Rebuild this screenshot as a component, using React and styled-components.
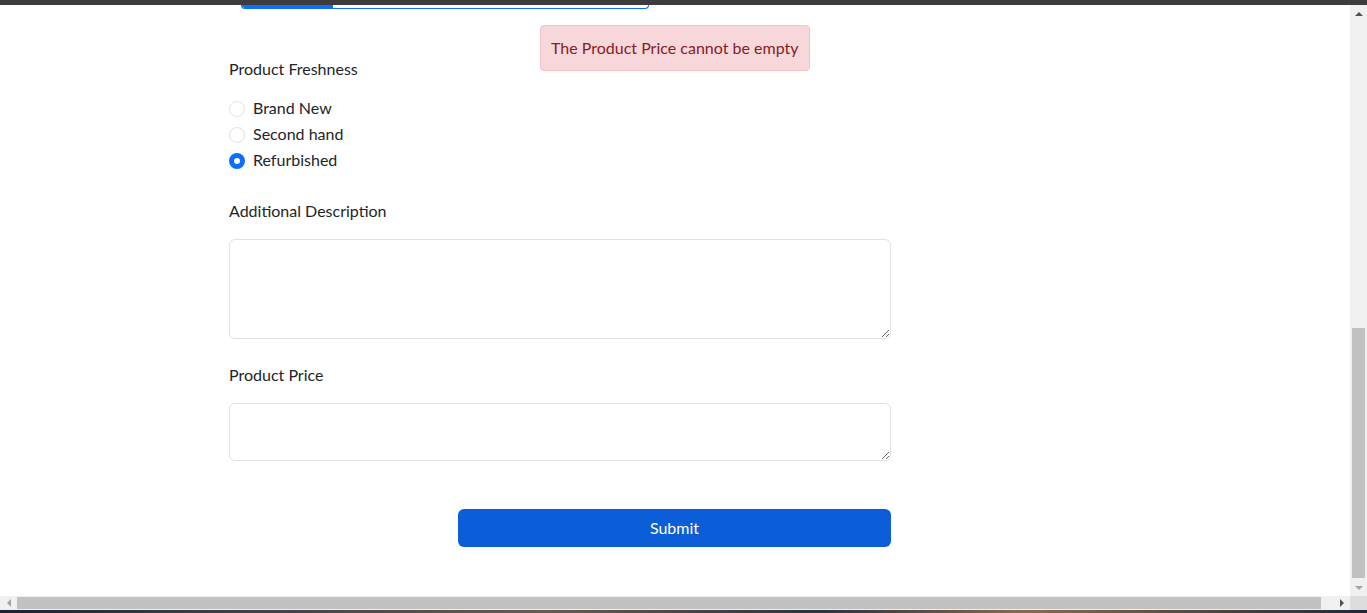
import React from "react";
import styled, { createGlobalStyle } from "styled-components";

const Global = createGlobalStyle`
  html, body { margin: 0; padding: 0; overflow: hidden; background: #fff; }
  body { font-family: "Lato", "Liberation Sans", sans-serif; color: #212529; }
  * { box-sizing: border-box; }
`;

const Frame = styled.div`
  width: 1367px;
  height: 613px;
  display: flex;
  flex-direction: column;
`;

const TopBar = styled.div`
  height: 5px;
  background: #3c3c3c;
  flex: none;
`;

const Middle = styled.div`
  flex: 1;
  display: flex;
  min-height: 0;
`;

const Viewport = styled.div`
  flex: 1;
  position: relative;
  overflow: hidden;
  background: #fff;
`;

const VScroll = styled.div`
  width: 17px;
  background: #f0f0f0;
  display: flex;
  flex-direction: column;
  align-items: center;
`;

const ArrowBox = styled.div`
  width: 17px;
  height: 17px;
  flex: none;
  display: flex;
  align-items: center;
  justify-content: center;
`;

const VTrack = styled.div`
  flex: 1;
  width: 100%;
  display: flex;
  flex-direction: column;
  padding: 0 2px;
`;

const VThumb = styled.div`
  margin-top: ${(p) => p.$offset}px;
  height: ${(p) => p.$size}px;
  background: #c1c1c1;
`;

const HRow = styled.div`
  height: 14px;
  display: flex;
  flex: none;
`;

const HScroll = styled.div`
  flex: 1;
  background: #f0f0f0;
  display: flex;
  align-items: center;
`;

const HArrow = styled.div`
  width: 17px;
  height: 14px;
  flex: none;
  display: flex;
  align-items: center;
  justify-content: center;
`;

const HTrack = styled.div`
  flex: 1;
  height: 100%;
  padding: 1px 0;
  display: flex;
`;

const HThumb = styled.div`
  width: ${(p) => p.$size}px;
  background: #c1c1c1;
`;

const Corner = styled.div`
  width: 17px;
  background: #dcdcdc;
`;

const BottomStrip = styled.div`
  height: 3px;
  flex: none;
  background: linear-gradient(90deg, #1b2233 0%, #3a3c48 15%, #6a5a50 40%, #2c3140 60%, #8a6a4a 75%, #20283a 100%);
`;

const Form = styled.form`
  margin-left: 229px;
  width: 662px;
  display: flex;
  flex-direction: column;
`;

const Progress = styled.div`
  margin-left: 12px;
  width: 408px;
  height: 4px;
  border: 1px solid #0d6efd;
  border-top: none;
  border-radius: 0 0 5px 5px;
  display: flex;
  overflow: hidden;
`;

const ProgressFill = styled.div`
  width: ${(p) => p.$pct}%;
  background: #0d6efd;
`;

const Label = styled.label`
  display: block;
  font-size: 16px;
  line-height: 24px;
  margin-top: ${(p) => p.$mt}px;
`;

const RadioGroup = styled.div`
  display: flex;
  flex-direction: column;
  gap: 2px;
  margin-top: 16px;
`;

const RadioRow = styled.label`
  display: flex;
  align-items: center;
  height: 24px;
  font-size: 16px;
  gap: 8px;
`;

const RadioText = styled.span`
  line-height: 24px;
  margin-bottom: 2px;
`;

const Radio = styled.input.attrs({ type: "radio" })`
  appearance: none;
  margin: 0;
  width: 16px;
  height: 16px;
  border-radius: 50%;
  border: 1px solid #dee2e6;
  background: #fff;
  flex: none;
  &:checked {
    border: 5px solid #0d6efd;
    background: #fff;
  }
`;

const TextArea = styled.textarea`
  margin-top: 16px;
  width: 662px;
  height: ${(p) => p.$h}px;
  border: 1px solid #dee2e6;
  border-radius: 6px;
  font-family: inherit;
  font-size: 16px;
  padding: 6px 12px;
  outline: none;
`;

const ButtonRow = styled.div`
  display: flex;
  justify-content: flex-end;
  margin-top: 48px;
`;

const Submit = styled.button`
  width: 433px;
  height: 38px;
  border: none;
  border-radius: 6px;
  background: #0b5ed7;
  color: #fff;
  font-family: inherit;
  font-size: 16px;
  padding: 0 0 2px;
`;

const Alert = styled.div`
  position: absolute;
  left: 540px;
  top: 20px;
  height: 46px;
  padding: 0 10px 2px;
  display: flex;
  align-items: center;
  background: #f8d7da;
  border: 1px solid #f5c2c7;
  border-radius: 4px;
  color: #842029;
  font-size: 16px;
`;

const Tri = ({ dir, color }) => {
  const pts = {
    up: "0,4 4,0 8,4",
    down: "0,0 8,0 4,4",
    left: "4,0 4,8 0,4",
    right: "0,0 0,8 4,4",
  }[dir];
  const vertical = dir === "up" || dir === "down";
  return (
    <svg width={vertical ? 8 : 4} height={vertical ? 4 : 8} viewBox={vertical ? "0 0 8 4" : "0 0 4 8"}>
      <polygon points={pts} fill={color} />
    </svg>
  );
};

export default function App() {
  return (
    <Frame>
      <Global />
      <TopBar />
      <Middle>
        <Viewport>
          <Form onSubmit={(e) => e.preventDefault()}>
            <Progress>
              <ProgressFill $pct={22.5} />
            </Progress>
            <Label $mt={48}>Product Freshness</Label>
            <RadioGroup>
              <RadioRow>
                <Radio name="fresh" />
                <RadioText>Brand New</RadioText>
              </RadioRow>
              <RadioRow>
                <Radio name="fresh" />
                <RadioText>Second hand</RadioText>
              </RadioRow>
              <RadioRow>
                <Radio name="fresh" defaultChecked />
                <RadioText>Refurbished</RadioText>
              </RadioRow>
            </RadioGroup>
            <Label $mt={26}>Additional Description</Label>
            <TextArea $h={100} />
            <Label $mt={24}>Product Price</Label>
            <TextArea $h={58} />
            <ButtonRow>
              <Submit type="submit">Submit</Submit>
            </ButtonRow>
          </Form>
          <Alert>The Product Price cannot be empty</Alert>
        </Viewport>
        <VScroll>
          <ArrowBox>
            <Tri dir="up" color="#505050" />
          </ArrowBox>
          <VTrack>
            <VThumb $offset={306} $size={250} />
          </VTrack>
          <ArrowBox>
            <Tri dir="down" color="#a3a3a3" />
          </ArrowBox>
        </VScroll>
      </Middle>
      <HRow>
        <HScroll>
          <HArrow>
            <Tri dir="left" color="#a3a3a3" />
          </HArrow>
          <HTrack>
            <HThumb $size={1304} />
          </HTrack>
          <HArrow>
            <Tri dir="right" color="#505050" />
          </HArrow>
        </HScroll>
        <Corner />
      </HRow>
      <BottomStrip />
    </Frame>
  );
}
